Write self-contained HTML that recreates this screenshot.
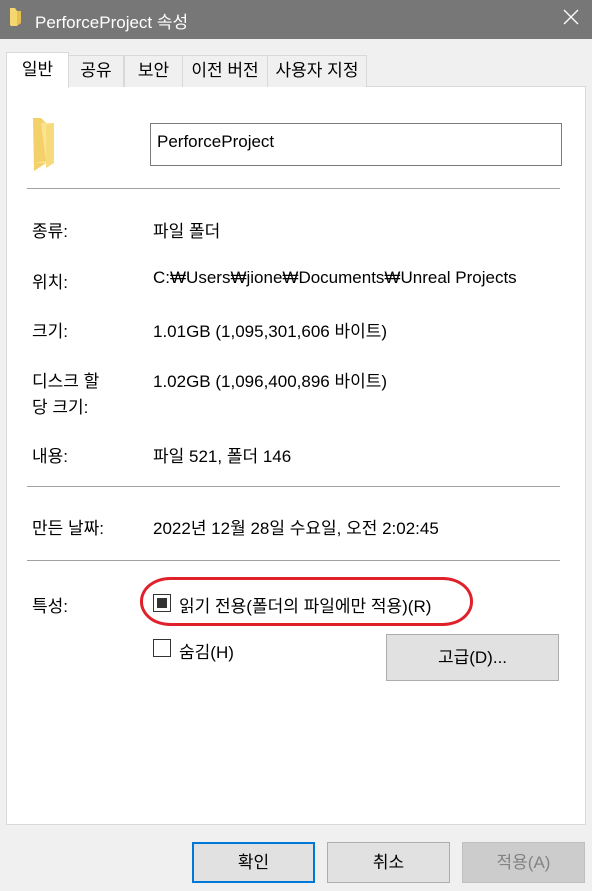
<!DOCTYPE html>
<html><head><meta charset="utf-8"><style>
*{margin:0;padding:0;box-sizing:border-box}
body{width:592px;height:891px;background:#f0f0f0;position:relative;overflow:hidden;font-family:"Liberation Sans","Noto Sans CJK KR","NanumGothic",sans-serif;font-size:17px;color:#000}
.a{position:absolute;white-space:nowrap}
.tab{position:absolute;top:55px;height:32px;border:1px solid #d9d9d9;border-bottom:none;background:#f0f0f0;text-align:center;line-height:30px;font-size:17px}
.sep{position:absolute;left:27px;width:533px;height:1px;background:#a0a0a0}
.btn{position:absolute;border:1px solid #adadad;background:#e1e1e1;text-align:center;font-size:17px}
.cb{position:absolute;width:18px;height:18px;border:1px solid #333;background:#fff}
</style></head><body>
<div class="a" style="left:0;top:0;width:592px;height:39px;background:#777"></div>
<svg class="a" style="left:9px;top:7px" width="14" height="20"><path d="M1 1h5l2 3v15H2L1 18z" fill="#f5d66f"/><path d="M8 4h4v12l-4 3z" fill="#e8c052"/></svg>
<div class="a" style="left:35px;top:8px;color:#fff;font-size:17px">PerforceProject 속성</div>
<svg class="a" style="left:563px;top:9px" width="16" height="16"><path d="M1 1L15 15M15 1L1 15" stroke="#fff" stroke-width="1.3"/></svg>

<div class="a" style="left:6px;top:86px;width:580px;height:739px;background:#fff;border:1px solid #d9d9d9"></div>
<div class="tab" style="left:68px;width:56px">공유</div>
<div class="tab" style="left:124px;width:59px">보안</div>
<div class="tab" style="left:182px;width:86px">이전 버전</div>
<div class="tab" style="left:267px;width:100px">사용자 지정</div>
<div class="tab" style="left:6px;top:52px;width:63px;height:36px;background:#fff;line-height:34px">일반</div>

<svg class="a" style="left:32px;top:117px" width="32" height="54"><path d="M1 1h8l5 5v40l-12 8z" fill="#f3d06a"/><path d="M9 6h13v40H2l12-2z" fill="#fbe390"/><path d="M14 8l8-2v40l-8 5z" fill="#f7da7c"/></svg>
<div class="a" style="left:150px;top:123px;width:412px;height:43px;border:1px solid #7a7a7a;background:#fff;padding:8px 0 0 6px;font-size:17px">PerforceProject</div>
<div class="sep" style="top:188px"></div>

<div class="a" style="left:32px;top:217px">종류:</div><div class="a" style="left:153px;top:217px">파일 폴더</div>
<div class="a" style="left:32px;top:268px">위치:</div><div class="a" style="left:153px;top:268px">C:₩Users₩jione₩Documents₩Unreal Projects</div>
<div class="a" style="left:32px;top:317px">크기:</div><div class="a" style="left:153px;top:317px">1.01GB (1,095,301,606 바이트)</div>
<div class="a" style="left:32px;top:367px">디스크 할</div><div class="a" style="left:32px;top:393px">당 크기:</div><div class="a" style="left:153px;top:367px">1.02GB (1,096,400,896 바이트)</div>
<div class="a" style="left:32px;top:442px">내용:</div><div class="a" style="left:153px;top:442px">파일 521, 폴더 146</div>
<div class="sep" style="top:486px"></div>
<div class="a" style="left:32px;top:514px">만든 날짜:</div><div class="a" style="left:153px;top:514px">2022년 12월 28일 수요일, 오전 2:02:45</div>
<div class="sep" style="top:560px"></div>

<div class="a" style="left:32px;top:592px">특성:</div>
<div class="a" style="left:140px;top:577px;width:333px;height:49px;border:3px solid #e0202a;border-radius:30px/24px"></div>
<div class="cb" style="left:153px;top:594px"><div style="margin:3px;width:10px;height:10px;background:#333"></div></div>
<div class="a" style="left:179px;top:592px">읽기 전용(폴더의 파일에만 적용)(R)</div>
<div class="cb" style="left:153px;top:639px"></div>
<div class="a" style="left:179px;top:638px">숨김(H)</div>
<div class="btn" style="left:386px;top:634px;width:173px;height:47px;line-height:45px">고급(D)...</div>

<div class="btn" style="left:192px;top:842px;width:123px;height:41px;line-height:37px;border:2px solid #0078d7">확인</div>
<div class="btn" style="left:327px;top:842px;width:123px;height:41px;line-height:39px">취소</div>
<div class="btn" style="left:462px;top:842px;width:123px;height:41px;line-height:39px;background:#ccc;border-color:#bfbfbf;color:#838383">적용(A)</div>
</body></html>
